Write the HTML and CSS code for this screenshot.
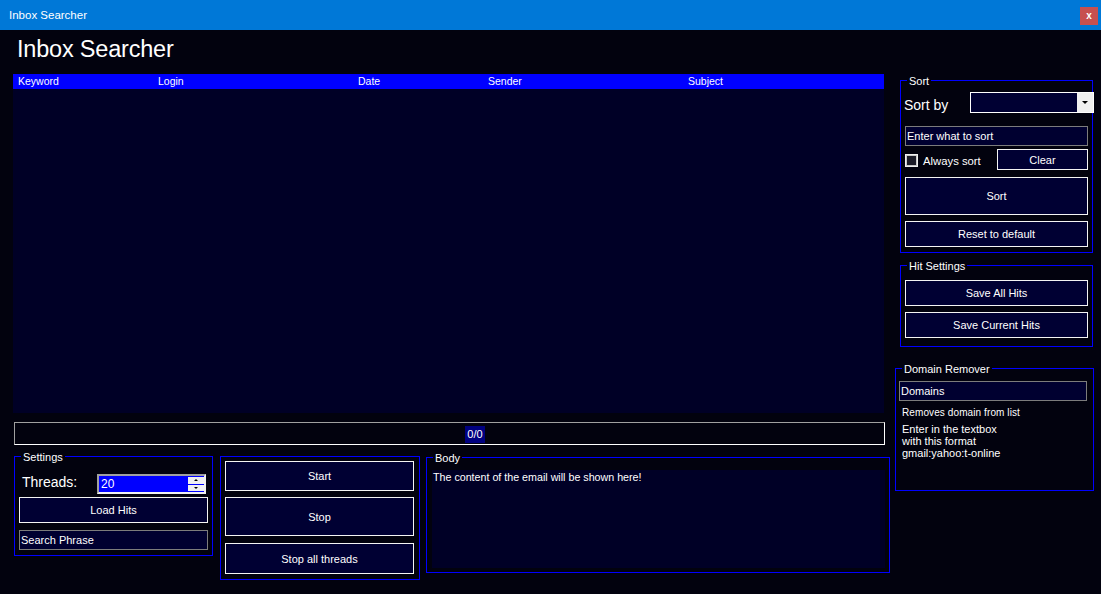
FILE: index.html
```html
<!DOCTYPE html>
<html>
<head>
<meta charset="utf-8">
<title>Inbox Searcher</title>
<link rel="stylesheet" href="styles.css">
</head>
<body>
<div class="titlebar">
  <span class="title">Inbox Searcher</span>
  <span class="close">x</span>
</div>
<div class="main">
  <div class="left">
    <h1 class="heading">Inbox Searcher</h1>
    <div class="list">
      <div class="list-head">
        <span>Keyword</span><span>Login</span><span>Date</span><span>Sender</span><span>Subject</span>
      </div>
      <div class="list-body"></div>
    </div>
    <div class="progress"><span class="progress-label">0/0</span></div>
    <div class="bottom">
      <div class="group settings">
        <span class="legend">Settings</span>
        <div class="threads-row">
          <span class="threads-label">Threads:</span>
          <div class="spinner">
            <span class="spin-value">20</span>
            <div class="spin-btns">
              <span class="spin-btn"><span class="tri-up"></span></span>
              <span class="spin-btn"><span class="tri-down"></span></span>
            </div>
          </div>
        </div>
        <div class="btn btn-load">Load Hits</div>
        <div class="textbox tb-search">Search Phrase</div>
      </div>
      <div class="group actions">
        <div class="btn btn-start">Start</div>
        <div class="btn btn-stop">Stop</div>
        <div class="btn btn-stopall">Stop all threads</div>
      </div>
      <div class="group body-group">
        <span class="legend">Body</span>
        <div class="body-text">The content of the email will be shown here!</div>
      </div>
    </div>
  </div>
  <div class="right">
    <div class="group sort-group">
      <span class="legend">Sort</span>
      <div class="sortby-row">
        <span class="sortby-label">Sort by</span>
        <div class="combo"><span class="combo-field"></span><span class="combo-btn"><span class="tri-down"></span></span></div>
      </div>
      <div class="textbox tb-sort">Enter what to sort</div>
      <div class="check-row">
        <span class="checkbox"></span>
        <span class="check-label">Always sort</span>
        <div class="btn btn-clear">Clear</div>
      </div>
      <div class="btn btn-sort">Sort</div>
      <div class="btn btn-reset">Reset to default</div>
    </div>
    <div class="group hit-group">
      <span class="legend">Hit Settings</span>
      <div class="btn btn-hit">Save All Hits</div>
      <div class="btn btn-hit btn-hit2">Save Current Hits</div>
    </div>
    <div class="group domain-group">
      <span class="legend">Domain Remover</span>
      <div class="textbox tb-domains">Domains</div>
      <div class="domain-note">Removes domain from list</div>
      <div class="domain-help">Enter in the textbox<br>with this format<br>gmail:yahoo:t-online</div>
    </div>
  </div>
</div>
</body>
</html>
```
FILE: styles.css
```css
* { box-sizing: border-box; }
html, body {
  margin: 0;
  padding: 0;
}
body {
  width: 1101px;
  height: 594px;
  overflow: hidden;
  background: #02020e;
  color: #ffffff;
  font-family: "Liberation Sans", Arial, sans-serif;
  font-size: 11px;
}

/* title bar */
.titlebar {
  height: 30px;
  background: #0078d7;
  display: flex;
  justify-content: space-between;
  align-items: flex-start;
  padding: 0 3px 0 9px;
}
.title {
  font-size: 11.5px;
  line-height: 30px;
}
.close {
  margin-top: 7px;
  width: 18px;
  height: 18px;
  background: #c75050;
  color: #fff;
  font-weight: bold;
  font-size: 10px;
  line-height: 17px;
  text-align: center;
}

/* main layout */
.main {
  display: flex;
  padding-left: 14px;
}
.left {
  width: 876px;
  flex: none;
}
.right {
  width: 198px;
  margin-left: 5px;
  flex: none;
  display: flex;
  flex-direction: column;
  align-items: flex-start;
}

.heading {
  margin: 0;
  height: 44px;
  padding: 6px 0 0 3px;
  font-weight: normal;
  font-size: 23.5px;
  letter-spacing: -0.2px;
  line-height: 26px;
}

/* list view */
.list {
  width: 871px;
  margin-left: -1px;
}
.list-head {
  height: 15px;
  background: #0000ff;
  display: grid;
  grid-template-columns: 140px 200px 130px 200px 1fr;
  font-size: 10.5px;
  line-height: 15px;
}
.list-head span { padding-left: 5px; }
.list-body {
  height: 324px;
  background: #000026;
}

/* progress bar */
.progress {
  margin-top: 9px;
  width: 871px;
  height: 23px;
  border: 1px solid;
  border-color: #a0a0a0 #ffffff #ffffff #a0a0a0;
  display: flex;
  align-items: flex-start;
}
.progress-label {
  margin-top: 3px;
  margin-left: 450px;
  width: 20px;
  height: 17px;
  line-height: 17px;
  text-align: center;
  background: #000080;
  font-size: 11px;
}

/* bottom row */
.bottom {
  display: flex;
  align-items: flex-start;
  margin-top: 11px;
}

/* group boxes */
.group {
  position: relative;
  border: 1px solid #0000ff;
  display: flex;
  flex-direction: column;
  flex: none;
}
.legend {
  position: absolute;
  top: -6px;
  left: 6px;
  padding: 0 2px;
  background: #02020e;
  font-size: 11px;
  line-height: 13px;
  white-space: nowrap;
}

/* buttons & textboxes */
.btn {
  display: flex;
  align-items: center;
  justify-content: center;
  border: 1px solid #f4f4f4;
  background: #000033;
  font-size: 11px;
  flex: none;
}
.textbox {
  border: 1px solid #7c7c7c;
  background: #000030;
  font-size: 11px;
  height: 20px;
  line-height: 18px;
  padding-left: 1px;
  flex: none;
}

/* settings group */
.settings {
  width: 199px;
  height: 100px;
  padding: 17px 4px 5px 4px;
}
.threads-row {
  display: flex;
  height: 20px;
}
.threads-label {
  width: 78px;
  padding-left: 3px;
  font-size: 14px;
  line-height: 17px;
}
.spinner {
  width: 109px;
  height: 20px;
  border: 2px solid;
  border-color: #a0a0a0 #f0f0f0 #f0f0f0 #a0a0a0;
  background: #0000ff;
  display: flex;
  justify-content: space-between;
}
.spin-value {
  padding-left: 2px;
  font-size: 12px;
  line-height: 16px;
}
.spin-btns {
  width: 16px;
  display: flex;
  flex-direction: column;
  gap: 1px;
  padding: 1px 0;
}
.spin-btn {
  flex: 1;
  background: #f0f0f0;
  display: flex;
  align-items: center;
  justify-content: center;
}
.tri-up {
  width: 0; height: 0;
  border-left: 2px solid transparent;
  border-right: 2px solid transparent;
  border-bottom: 2px solid #000;
}
.tri-down {
  width: 0; height: 0;
  border-left: 3px solid transparent;
  border-right: 3px solid transparent;
  border-top: 3px solid #000;
}
.spin-btn .tri-down {
  border-left-width: 2px;
  border-right-width: 2px;
  border-top-width: 2px;
}
.btn-load {
  margin-top: 3px;
  height: 26px;
}
.tb-search {
  margin-top: 7px;
}

/* actions group */
.actions {
  margin-left: 7px;
  width: 200px;
  height: 124px;
  padding: 4px 5px 5px 4px;
}
.btn-start { height: 30px; }
.btn-stop { height: 39px; margin-top: 6px; }
.btn-stopall { height: 31px; margin-top: 7px; }

/* body group */
.body-group {
  margin-left: 6px;
  margin-top: 1px;
  width: 464px;
  height: 116px;
  padding: 12px 4px 4px 5px;
}
.body-text {
  height: 98px;
  background: #000026;
  padding: 1px 0 0 1px;
  font-size: 10.7px;
  line-height: 13px;
}

/* sort group */
.sort-group {
  margin-top: 50px;
  margin-left: 5px;
  width: 193px;
  height: 173px;
  padding: 11px 4px 5px 4px;
}
.sortby-row {
  display: flex;
  height: 21px;
}
.sortby-label {
  flex: none;
  width: 66px;
  margin-left: -1px;
  margin-top: 5px;
  font-size: 14px;
  line-height: 17px;
}
.combo {
  flex: none;
  width: 124px;
  height: 21px;
  border: 1px solid #ffffff;
  background: #000033;
  display: flex;
  justify-content: flex-end;
}
.combo-btn {
  width: 16px;
  background: #f0f0f0;
  display: flex;
  align-items: center;
  justify-content: center;
}
.tb-sort {
  margin-top: 13px;
}
.check-row {
  margin-top: 3px;
  height: 21px;
  display: flex;
  align-items: center;
}
.checkbox {
  width: 13px;
  height: 13px;
  margin-top: 2px;
  border: 1px solid #f0f0f0;
  box-shadow: inset 0 0 0 1px #c8c8c8;
  background: #1c1c28;
  flex: none;
}
.check-label {
  margin-left: 5px;
  font-size: 11.3px;
  margin-top: 2px;
  flex: 1;
}
.btn-clear {
  width: 91px;
  height: 21px;
}
.btn-sort {
  margin-top: 7px;
  height: 38px;
}
.btn-reset {
  margin-top: 6px;
  height: 26px;
}

/* hit settings */
.hit-group {
  margin-top: 12px;
  margin-left: 5px;
  width: 193px;
  height: 82px;
  padding: 14px 4px 8px 4px;
}
.btn-hit { height: 26px; }
.btn-hit2 { margin-top: 6px; }

/* domain remover */
.domain-group {
  margin-top: 21px;
  width: 199px;
  height: 123px;
  padding: 12px 6px 4px 3px;
}
.tb-domains {
  width: 188px;
}
.domain-note {
  margin-top: 6px;
  margin-left: 3px;
  font-size: 10px;
  line-height: 12px;
  letter-spacing: 0.1px;
}
.domain-help {
  margin-top: 4px;
  margin-left: 3px;
  font-size: 11px;
  line-height: 12px;
}
```
